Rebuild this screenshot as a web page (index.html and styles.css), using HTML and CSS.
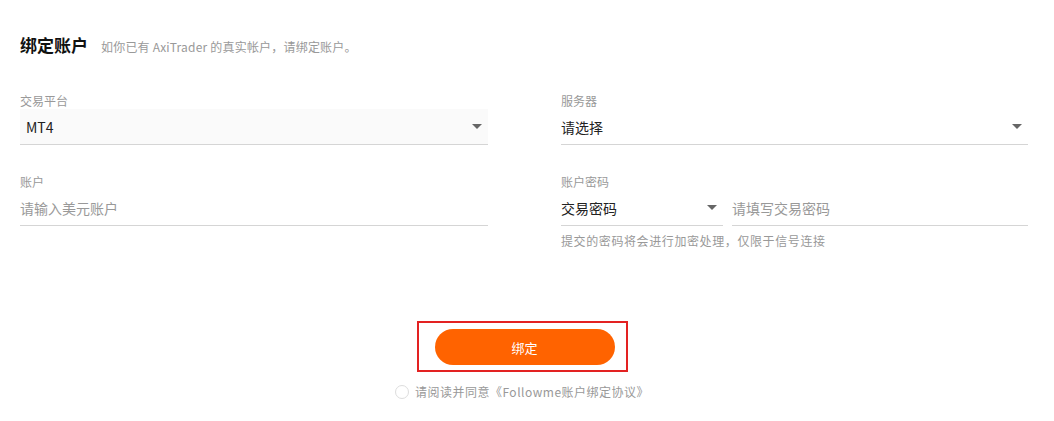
FILE: index.html
```html
<!DOCTYPE html>
<html lang="zh-CN">
<head>
<meta charset="utf-8">
<title>绑定账户</title>
<link rel="stylesheet" href="styles.css">
</head>
<body>
<div class="page">
  <div class="head">
    <h1 class="title">绑定账户</h1>
    <span class="subtitle">如你已有 AxiTrader 的真实帐户，请绑定账户。</span>
  </div>
  <div class="grid">
    <div class="field">
      <div class="label">交易平台</div>
      <div class="control select filled">
        <span class="value">MT4</span>
        <span class="caret"></span>
      </div>
    </div>
    <div class="field">
      <div class="label">服务器</div>
      <div class="control select">
        <span class="value">请选择</span>
        <span class="caret"></span>
      </div>
    </div>
    <div class="field">
      <div class="label">账户</div>
      <div class="control">
        <span class="placeholder">请输入美元账户</span>
      </div>
    </div>
    <div class="field">
      <div class="label">账户密码</div>
      <div class="pwd-row">
        <div class="control select pwd-type">
          <span class="value">交易密码</span>
          <span class="caret"></span>
        </div>
        <div class="control pwd-input">
          <span class="placeholder">请填写交易密码</span>
        </div>
      </div>
      <div class="hint">提交的密码将会进行加密处理，仅限于信号连接</div>
    </div>
  </div>
  <div class="actions">
    <div class="highlight">
      <button class="btn" type="button">绑定</button>
    </div>
    <div class="agree">
      <span class="radio"></span>
      <span class="agree-text">请阅读并同意《Followme账户绑定协议》</span>
    </div>
  </div>
</div>
</body>
</html>
```

FILE: styles.css
```css
* { box-sizing: border-box; }
html, body { margin: 0; padding: 0; background: #fff; }
body {
  font-family: "Noto Sans CJK SC", "Liberation Sans", sans-serif;
  color: #333;
}
.page {
  width: 1054px;
  padding: 30px 26px 0 20px;
}
.head {
  display: flex;
  align-items: baseline;
  height: 30px;
}
.title {
  margin: 0;
  font-size: 17px;
  font-weight: 700;
  color: #111;
  line-height: 30px;
}
.subtitle {
  margin-left: 13px;
  font-size: 12px;
  color: #999;
  letter-spacing: 0.2px;
}
.grid {
  display: grid;
  grid-template-columns: 468px 467px;
  column-gap: 73px;
  row-gap: 0;
  margin-top: 33px;
}
.field { display: flex; flex-direction: column; }
.field:nth-child(3), .field:nth-child(4) { margin-top: 29px; }
.label {
  font-size: 12px;
  line-height: 16px;
  color: #999;
}
.control {
  display: flex;
  align-items: center;
  height: 36px;
  border-bottom: 1px solid #d5d5d5;
  font-size: 14px;
}
.select.filled { background: #fafafa; }
.filled .value { padding-left: 6px; }
.value { flex: 1; color: #222; }
.placeholder { color: #999; }
.caret {
  width: 0; height: 0;
  border-left: 5px solid transparent;
  border-right: 5px solid transparent;
  border-top: 5px solid #666;
  margin-right: 6px;
}
.pwd-row { display: flex; gap: 9px; }
.pwd-type { width: 162px; flex: none; }
.pwd-input { flex: 1; }
.hint {
  font-size: 12px;
  color: #999;
  line-height: 16px;
  margin-top: 7px;
  letter-spacing: 0.6px;
}
.actions {
  display: flex;
  flex-direction: column;
  align-items: center;
  margin-top: 72px;
  padding-right: 4px;
}
.highlight {
  border: 2px solid #e32222;
  padding: 6px 10px 4px 16px;
  width: 211px;
  height: 51px;
}
.btn {
  display: block;
  width: 180px;
  height: 36px;
  border: none;
  border-radius: 18px;
  background: #ff6300;
  color: #fff;
  font-family: "Noto Sans CJK SC", sans-serif;
  font-size: 13px;
  cursor: pointer;
}
.agree {
  display: flex;
  align-items: center;
  margin-top: 11px;
}
.radio {
  width: 14px; height: 14px;
  border: 1px solid #ddd;
  border-radius: 50%;
  margin-right: 6px;
}
.agree-text { font-size: 12px; color: #999; letter-spacing: 0.5px; }
```
